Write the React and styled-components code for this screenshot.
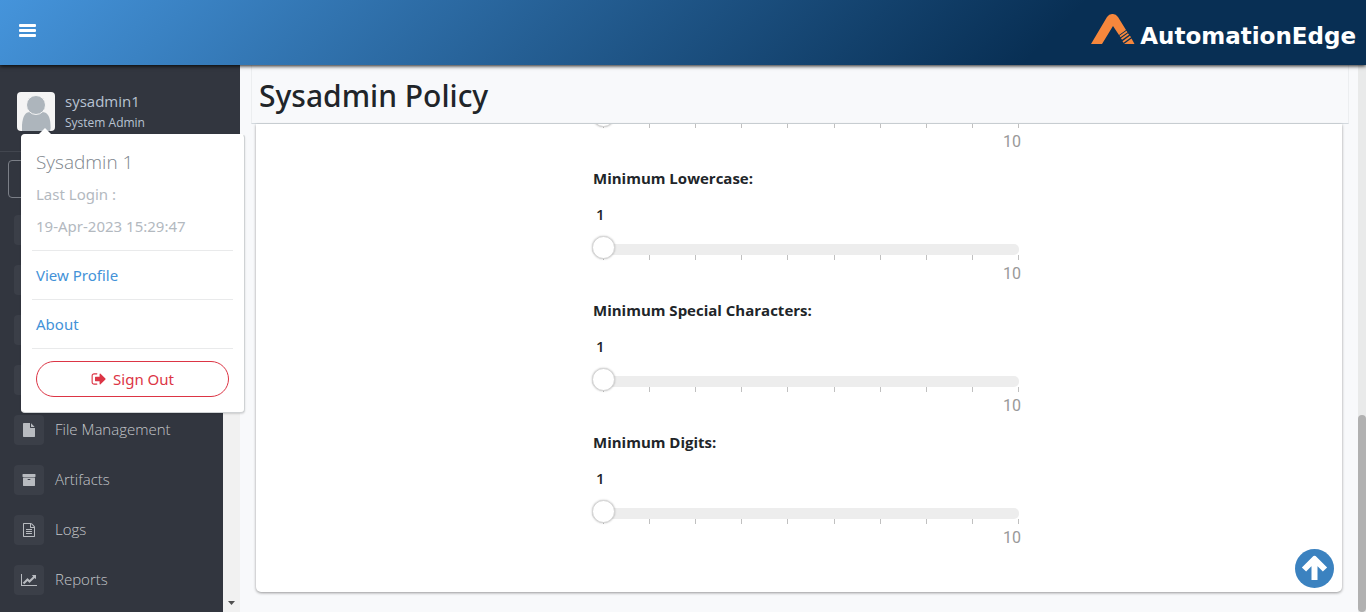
import React, { useState } from "react";
import styled, { createGlobalStyle } from "styled-components";

const GlobalStyle = createGlobalStyle`
  * { box-sizing: border-box; }
  body {
    margin: 0;
    background: #f8f9fb;
    color: #212529;
    font: 15px/24px "Open Sans", "Noto Sans", sans-serif;
  }
`;

const Page = styled.div`
  display: flex;
  flex-direction: column;
  height: 100vh;
  overflow: hidden;
`;

const Header = styled.header`
  display: flex;
  flex: none;
  align-items: center;
  justify-content: space-between;
  height: 65px;
  padding: 0 10px 4px 16px;
  background: linear-gradient(135deg, #4594db 0%, #082f54 76%);
  box-shadow: 0 1px 4px rgba(0, 0, 0, 0.9);
  z-index: 3;
`;

const MenuButton = styled.button`
  display: flex;
  padding: 3px;
  border: 0;
  background: none;
  color: #fff;
`;

const Brand = styled.a`
  display: flex;
  align-items: flex-end;
  gap: 5px;
  padding-bottom: 4px;
  color: #fff;
  font: bold 23px/16px "DejaVu Sans", sans-serif;
  text-decoration: none;
`;

const Body = styled.div`
  display: flex;
  flex: 1;
  min-height: 0;
`;

const Sidebar = styled.aside`
  position: relative;
  display: flex;
  flex: none;
  flex-direction: column;
  width: 240px;
  background: #32363f;
  z-index: 2;
`;

const UserBlock = styled.div`
  display: flex;
  flex: none;
  gap: 10px;
  height: 87px;
  padding: 27px 17px 0;
  border-bottom: 1px solid #42464f;
`;

const Avatar = styled.svg`
  width: 38px;
  height: 39px;
  border-radius: 4px;
  background: #f4f4f4;
`;

const UserText = styled.div`
  display: flex;
  flex-direction: column;
  color: #b8c3d2;
`;

const UserName = styled.span`
  line-height: 18px;
`;

const UserRole = styled.span`
  font-size: 12px;
  line-height: 26px;
`;

const MenuArea = styled.div`
  display: flex;
  flex: 1;
  min-height: 0;
`;

const MenuColumn = styled.div`
  flex: 1;
  overflow: hidden;
`;

const SearchBox = styled.input`
  display: block;
  width: 207px;
  height: 38px;
  margin: 8px 8px 7px;
  border: 1px solid #7b7f87;
  border-radius: 4px;
  background: none;
`;

const MenuList = styled.ul`
  margin: 0;
  padding: 0;
  list-style: none;
`;

const MenuLink = styled.a`
  display: flex;
  align-items: center;
  gap: 11px;
  height: 50px;
  padding-left: 14px;
  color: #c4c6ca;
  font-weight: 300;
  line-height: 22px;
  text-decoration: none;
`;

const MenuText = styled.span`
  padding-bottom: 2px;
`;

const MenuIcon = styled.span`
  display: flex;
  align-items: center;
  justify-content: center;
  width: 30px;
  height: 30px;
  border-radius: 4px;
  background: #3b3f48;
  color: #b8bbc0;
`;

const MenuScroll = styled.div`
  display: flex;
  align-items: flex-end;
  justify-content: center;
  width: 17px;
  padding-bottom: 7px;
  background: #f1f1f1;
`;

const Popup = styled.section`
  position: absolute;
  top: 69px;
  left: 21px;
  width: 224px;
  padding: 11px 11px 3px 10px;
  border: 1px solid #cfd2d4;
  border-left-color: #fff;
  border-top-color: #fff;
  border-radius: 4px;
  background: #fff;
  box-shadow: 0 1px 2px rgba(0, 0, 0, 0.15);
  font-family: "Noto Sans", sans-serif;

  &::before {
    position: absolute;
    top: -7px;
    left: 16px;
    border: solid transparent;
    border-width: 0 7px 7px;
    border-bottom-color: #fff;
    content: "";
  }
`;

const PopupTitle = styled.h2`
  margin: 0;
  padding: 0 4px;
  color: #7d858c;
  font: 300 19px/32px "Open Sans", sans-serif;
`;

const PopupText = styled.p`
  margin: 0;
  padding: 0 4px;
  color: #b3b9bf;
  line-height: 32px;
`;

const PopupRow = styled.div`
  padding: 12px 4px;
  border-top: 1px solid #e9eaeb;
`;

const PopupLinks = styled.div`
  margin-top: 8px;
`;

const PopupLink = styled.a`
  color: #4392d8;
  text-decoration: none;
`;

const SignOut = styled.button`
  display: flex;
  align-items: center;
  justify-content: center;
  gap: 6px;
  width: 193px;
  height: 36px;
  border: 1px solid #dc3545;
  border-radius: 18px;
  background: #fff;
  color: #dc3545;
  font: inherit;
`;

const Main = styled.main`
  display: flex;
  flex: 1;
  flex-direction: column;
  min-width: 0;
  padding: 0 9px 20px 11px;
`;

const TitleBar = styled.div`
  flex: none;
  height: 59px;
  padding: 9px 7px;
  border: solid #eceef0;
  border-width: 0 1px 1px;
  border-bottom-color: #d3d9de;
`;

const Title = styled.h1`
  margin: 0;
  font: 500 30px/44px "Noto Sans", sans-serif;
`;

const Card = styled.div`
  display: flex;
  flex: 1;
  flex-direction: column;
  justify-content: flex-end;
  min-height: 0;
  margin: 0 7px 0 5px;
  padding-bottom: 42px;
  overflow: hidden;
  border-radius: 0 0 5px 5px;
  background: #fff;
  box-shadow: 0 1px 3px rgba(0, 0, 0, 0.4);
`;

const Fields = styled.div`
  display: flex;
  flex-direction: column;
  gap: 12px;
  width: 440px;
  margin: 0 auto;
  padding-left: 13px;
`;

const Field = styled.div`
  display: flex;
  flex-direction: column;
`;

const FieldLabel = styled.label`
  padding-left: 1px;
  font-weight: 700;
`;

const FieldValue = styled.output`
  margin: 12px 4px 18px;
  font-weight: 600;
`;

const Range = styled.input`
  position: relative;
  z-index: 1;
  width: 100%;
  height: 11px;
  margin: 0;
  appearance: none;
  background: none;

  &::-webkit-slider-runnable-track {
    height: 11px;
    border-radius: 5px;
    background: #ededed;
  }

  &::-webkit-slider-thumb {
    width: 23px;
    height: 23px;
    margin-top: -8px;
    appearance: none;
    border: 1px solid #d4d4d4;
    border-radius: 50%;
    background: #fff;
    box-shadow: 0 0 2px rgba(0, 0, 0, 0.25);
  }
`;

const Ticks = styled.div`
  display: flex;
  justify-content: space-between;
  height: 5px;
  padding-left: 11px;
`;

const Tick = styled.span`
  width: 1px;
  background: #c0c0c0;
`;

const MaxValue = styled.span`
  align-self: flex-end;
  margin: 2px -2px 0 0;
  color: #999;
  font: 16px/24px Roboto, sans-serif;
`;

const PageScroll = styled.div`
  display: flex;
  flex-direction: column;
  justify-content: flex-end;
  width: 8px;
  background: #e9eaea;
`;

const PageThumb = styled.div`
  height: 36%;
  border-radius: 4px;
  background: #b1b1b1;
`;

const TopButton = styled.button`
  position: fixed;
  right: 32px;
  bottom: 24px;
  display: flex;
  padding: 0;
  border: 0;
  background: none;
`;

const ICONS = {
  file: "M1152 512v-472q22 14 36 28l408 408q14 14 28 36h-472zm-128 32q0 40 28 68t68 28h544v1056q0 40-28 68t-68 28h-1344q-40 0-68-28t-28-68v-1600q0-40 28-68t68-28h800v544z",
  archive:
    "M1088 832q0-26-19-45t-45-19h-256q-26 0-45 19t-19 45 19 45 45 19h256q26 0 45-19t19-45zm576-192v960q0 26-19 45t-45 19h-1408q-26 0-45-19t-19-45v-960q0-26 19-45t45-19h1408q26 0 45 19t19 45zm64-448v256q0 26-19 45t-45 19h-1536q-26 0-45-19t-19-45v-256q0-26 19-45t45-19h1536q26 0 45 19t19 45z",
  logs: "M1596 380q28 28 48 76t20 88v1152q0 40-28 68t-68 28h-1344q-40 0-68-28t-28-68v-1600q0-40 28-68t68-28h896q40 0 88 20t76 48zm-444-244v376h376q-10-29-22-41l-313-313q-12-12-41-22zm384 1528v-1024h-416q-40 0-68-28t-28-68v-416h-768v1536h1280zm-1024-864q0-14 9-23t23-9h704q14 0 23 9t9 23v64q0 14-9 23t-23 9h-704q-14 0-23-9t-9-23v-64zm736 224q14 0 23 9t9 23v64q0 14-9 23t-23 9h-704q-14 0-23-9t-9-23v-64q0-14 9-23t23-9h704zm0 256q14 0 23 9t9 23v64q0 14-9 23t-23 9h-704q-14 0-23-9t-9-23v-64q0-14 9-23t23-9h704z",
  chart:
    "M2048 1536v128h-2048v-1536h128v1408h1920zm-128-1248v435q0 21-19.5 29.5t-35.5-7.5l-121-121-633 633q-10 10-23 10t-23-10l-233-233-416 416-192-192 585-585q10-10 23-10t23 10l233 233 464-464-121-121q-16-16-7.5-35.5t29.5-19.5h435q14 0 23 9t9 23z",
  signOut:
    "M704 1440q0 4 1 20t.5 26.5-3 23.5-10 19.5-20.5 6.5h-320q-119 0-203.5-84.5t-84.5-203.5v-704q0-119 84.5-203.5t203.5-84.5h320q13 0 22.5 9.5t9.5 22.5q0 4 1 20t.5 26.5-3 23.5-10 19.5-20.5 6.5h-320q-66 0-113 47t-47 113v704q0 66 47 113t113 47h312l11.5 1 11.5 3 8 5.5 7 9 2 13.5zm928-544q0 26-19 45l-544 544q-19 19-45 19t-45-19-19-45v-288h-448q-26 0-45-19t-19-45v-384q0-26 19-45t45-19h448v-288q0-26 19-45t45-19 45 19l544 544q19 19 19 45z",
  desktop:
    "M1728 992v-832q0-13-9.500-22.500t-22.500-9.500h-1600q-13 0-22.500 9.500t-9.500 22.500v832q0 13 9.500 22.500t22.500 9.500h1600q13 0 22.500-9.500t9.500-22.500z",
};

function Icon({ name, size = 14, wide }) {
  return (
    <svg
      width={wide ? 16 : size}
      height={size}
      viewBox={wide ? "0 0 2048 1792" : "0 0 1792 1792"}
      fill="currentColor"
      aria-hidden="true"
    >
      <path d={ICONS[name]} />
    </svg>
  );
}

const MENU = [
  { icon: "desktop", wide: true },
  {},
  {},
  {},
  { icon: "file", text: "File Management" },
  { icon: "archive", text: "Artifacts" },
  { icon: "logs", text: "Logs" },
  { icon: "chart", text: "Reports", wide: true },
];

function SliderField({ label, name }) {
  const [value, setValue] = useState(1);
  return (
    <Field>
      {label && (
        <>
          <FieldLabel htmlFor={name}>{label}</FieldLabel>
          <FieldValue htmlFor={name}>{value}</FieldValue>
        </>
      )}
      <Range
        id={name}
        type="range"
        min="1"
        max="10"
        value={value}
        aria-label={label ? undefined : "Minimum"}
        onChange={(e) => setValue(e.target.value)}
      />
      <Ticks>
        {Array.from({ length: 10 }, (_, i) => (
          <Tick key={i} />
        ))}
      </Ticks>
      <MaxValue>10</MaxValue>
    </Field>
  );
}

function BrandMark() {
  return (
    <svg width="44" height="31" viewBox="0 0 44 31" aria-hidden="true">
      <path
        d="M0 31 16 4Q18 1 21 1H22Q25 1 27 4L35 17 28 22 22 13 11 31Z"
        fill="#f6873c"
      />
      <path
        d="M29 23.500 36 18.500M30.500 26 37.500 21M32 29 39.500 23.500"
        stroke="#f6873c"
        strokeWidth="1.800"
      />
      <path d="M33 31 40.500 25.500 43.500 31Z" fill="#f6873c" />
    </svg>
  );
}

export default function App() {
  return (
    <Page>
      <GlobalStyle />
      <Header>
        <MenuButton aria-label="Toggle menu">
          <svg width="17" height="13" viewBox="0 0 17 13" fill="#fff">
            <rect width="17" height="3" rx="1" />
            <rect y="5" width="17" height="3" rx="1" />
            <rect y="10" width="17" height="3" rx="1" />
          </svg>
        </MenuButton>
        <Brand href="#">
          <BrandMark />
          AutomationEdge
        </Brand>
      </Header>
      <Body>
        <Sidebar>
          <UserBlock>
            <Avatar viewBox="0 0 38 39" fill="#adb5bc">
              <path d="M5 39V33Q6 20 13 20Q19 24 25 20Q33 20 33.500 33Q34 36 33 39Z" />
              <circle cx="19" cy="13" r="9.500" stroke="#f4f4f4" />
            </Avatar>
            <UserText>
              <UserName>sysadmin1</UserName>
              <UserRole>System Admin</UserRole>
            </UserText>
          </UserBlock>
          <MenuArea>
            <MenuColumn>
              <SearchBox type="search" aria-label="Search" />
              <MenuList>
                {MENU.map((item, i) => (
                  <li key={i}>
                    <MenuLink href="#">
                      <MenuIcon>
                        {item.icon && <Icon name={item.icon} wide={item.wide} />}
                      </MenuIcon>
                      <MenuText>{item.text}</MenuText>
                    </MenuLink>
                  </li>
                ))}
              </MenuList>
            </MenuColumn>
            <MenuScroll>
              <svg width="7" height="4" viewBox="0 0 7 4" fill="#505050">
                <path d="M0 0H7L3.500 4Z" />
              </svg>
            </MenuScroll>
          </MenuArea>
          <Popup>
            <PopupTitle>Sysadmin 1</PopupTitle>
            <PopupText>Last Login :</PopupText>
            <PopupText>19-Apr-2023 15:29:47</PopupText>
            <PopupLinks>
              <PopupRow>
                <PopupLink href="#">View Profile</PopupLink>
              </PopupRow>
              <PopupRow>
                <PopupLink href="#">About</PopupLink>
              </PopupRow>
              <PopupRow>
                <SignOut>
                  <Icon name="signOut" size={16} />
                  Sign Out
                </SignOut>
              </PopupRow>
            </PopupLinks>
          </Popup>
        </Sidebar>
        <Main>
          <TitleBar>
            <Title>Sysadmin Policy</Title>
          </TitleBar>
          <Card>
            <Fields>
              <SliderField name="uppercase" />
              <SliderField name="lowercase" label="Minimum Lowercase:" />
              <SliderField name="special" label="Minimum Special Characters:" />
              <SliderField name="digits" label="Minimum Digits:" />
            </Fields>
          </Card>
        </Main>
        <PageScroll>
          <PageThumb />
        </PageScroll>
      </Body>
      <TopButton aria-label="Back to top">
        <svg width="39" height="39" viewBox="0 0 39 39">
          <circle cx="19.500" cy="19.500" r="19.500" fill="#3b82c0" />
          <path
            d="M19.500 31V11M9 20.500 19.500 10 30 20.500"
            fill="none"
            stroke="#fff"
            strokeWidth="6"
            strokeLinejoin="round"
          />
        </svg>
      </TopButton>
    </Page>
  );
}
